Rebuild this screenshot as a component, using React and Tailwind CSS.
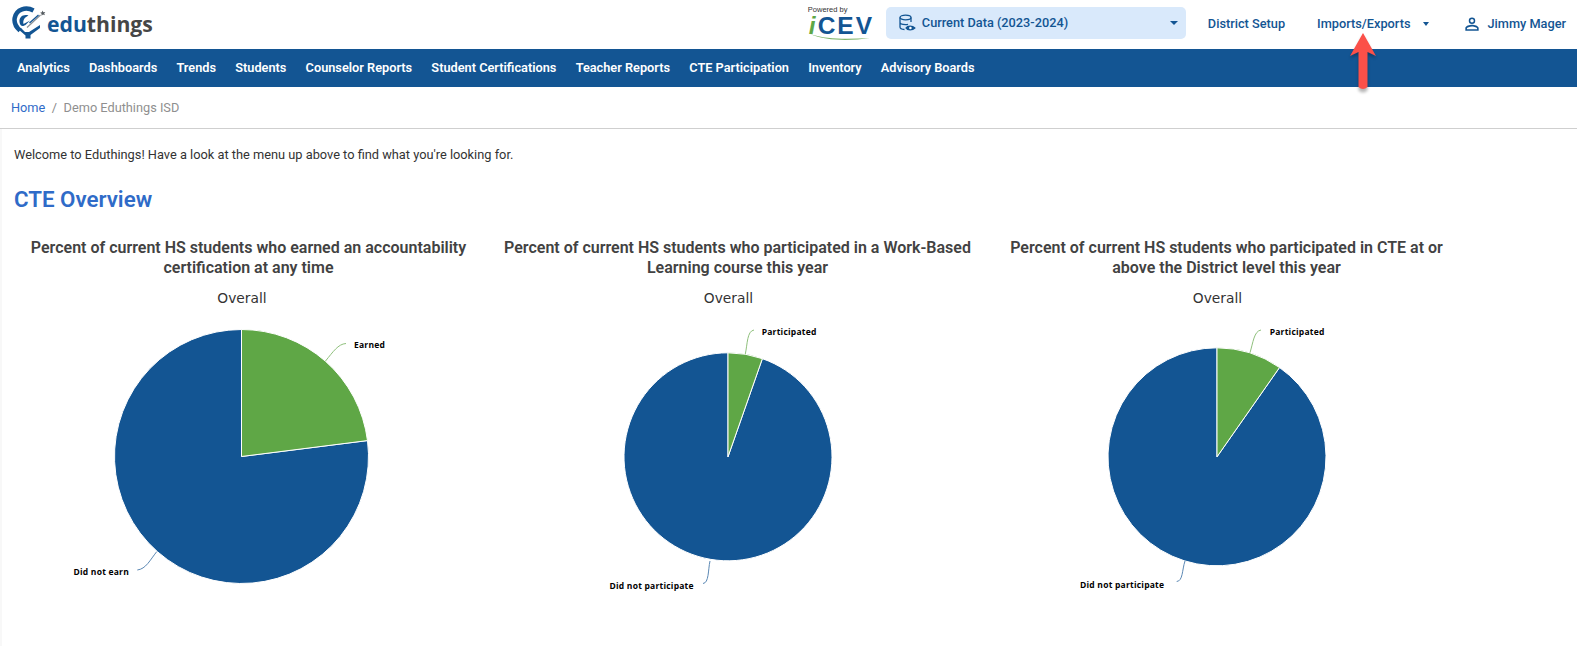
const navItems = ["Analytics","Dashboards","Trends","Students","Counselor Reports","Student Certifications","Teacher Reports","CTE Participation","Inventory","Advisory Boards"];

function polar(cx, cy, r, deg) {
  const a = (deg * Math.PI) / 180;
  return [cx + r * Math.sin(a), cy - r * Math.cos(a)];
}

function Pie({ colX, cx, cy, r, deg, labels }) {
  const [ex, ey] = polar(cx, cy, r, deg);
  return (
    <svg viewBox={`${colX} 288 489 320`} className="block w-[489px] h-[320px]">
      <text x={cx + 0.5} y="303" textAnchor="middle" fontFamily="'DejaVu Sans', sans-serif" fontSize="13.8" fill="#333333">Overall</text>
      <path d={`M${cx} ${cy} L${cx} ${cy - r} A${r} ${r} 0 1 0 ${ex} ${ey} Z`} fill="#135593" stroke="#ffffff" strokeWidth="1" />
      <path d={`M${cx} ${cy} L${cx} ${cy - r} A${r} ${r} 0 0 1 ${ex} ${ey} Z`} fill="#5fa746" stroke="#ffffff" strokeWidth="1" />
      {labels.map((l) => (
        <g key={l.text}>
          <path d={l.line} fill="none" stroke={l.color} strokeWidth="1" />
          <text x={l.x} y={l.y} fontFamily="'Open Sans', sans-serif" fontWeight="700" fontSize="8.5" letterSpacing="0.22" fill="#000000">{l.text}</text>
        </g>
      ))}
    </svg>
  );
}

function Chart({ title, pie }) {
  return (
    <div className="w-[489px] shrink-0">
      <h3 className="w-[476px] mx-auto h-[50px] text-center text-[16px] leading-[19.5px] font-semibold text-[#424242]">{title}</h3>
      <Pie {...pie} />
    </div>
  );
}

function Logo() {
  return (
    <div className="flex items-center">
      <svg width="35" height="34" viewBox="10 6 35 34" className="shrink-0">
        <path d="M32.5 10.5 C25 6.5 15.5 9 13.7 18 C12.8 23 15 27 19 30.5" fill="none" stroke="#135593" strokeWidth="4.5" />
        <path d="M17 29 L24.5 35.5 L24.5 38.5 L29.5 38.5 L29.5 35 L39 28 L39 25 L28 32 L24 32 L20 28 Z" fill="#135593" />
        <path d="M27.5 15.5 C22 14 18 17 18.5 22 C19 26.5 22 27 25 24.5 L29 20.5 L22.5 24 C21.5 20 24 17 27.5 15.5 Z" fill="#135593" />
        <path d="M26 27.5 L39.5 15" stroke="#8a8f94" strokeWidth="1.2" />
        <path d="M28.5 23 L37.5 15" stroke="#135593" strokeWidth="1.3" />
        <path d="M41.5 10.5 L42.4 12.2 L44.3 12.1 L43.2 13.5 L43.9 15.3 L42 14.6 L40.5 15.8 L40.6 13.8 L39.1 12.7 L40.9 12.3 Z" fill="#555b60" />
      </svg>
      <div className="ml-[1px] mt-[2px] text-[21.2px] leading-none font-bold font-['Open_Sans',sans-serif]">
        <span className="text-[#135593]">edu</span><span className="text-[#464646]">things</span>
      </div>
    </div>
  );
}

function Icev() {
  return (
    <div className="w-[66px] h-[40px] relative shrink-0 font-['Liberation_Sans',sans-serif]">
      <div className="text-[7.5px] leading-[8px] text-[#333] pt-[3px]">Powered by</div>
      <div className="text-[24.5px] leading-[23px] font-bold tracking-[2px] text-[#135593] pl-[1px]"><span className="text-[#5fa746] italic">i</span>CEV</div>
      <svg width="66" height="8" viewBox="0 0 66 8" className="absolute left-0 top-[30px]">
        <path d="M2 1 C20 7 42 6 62 5 C42 8 18 8 2 1 Z" fill="#7fb56a" />
      </svg>
    </div>
  );
}

function Caret({ w = 8 }) {
  return <span className="inline-block w-0 h-0 border-t-[4px] border-t-[#135593] border-x-[4px] border-x-transparent" style={{ borderLeftWidth: w / 2, borderRightWidth: w / 2 }} />;
}

function DbIcon() {
  return (
    <svg width="18" height="18" viewBox="0 0 18 18" fill="none" stroke="#135593" strokeWidth="1.3" className="shrink-0">
      <ellipse cx="7.5" cy="3.5" rx="5.5" ry="2.3" />
      <path d="M2 3.5 V13 C2 14.4 4 15.4 6.5 15.5 M13 3.5 V8 M2 8.3 C2 9.7 4.5 10.6 7.5 10.6 C8.5 10.6 9.5 10.5 10 10.3" />
      <path d="M8 14 C9.5 11.5 14.5 11.5 16.8 14 C14.5 16.5 9.5 16.5 8 14 Z" fill="#135593" stroke="#135593" />
      <circle cx="12.4" cy="14" r="1.3" fill="#ffffff" stroke="none" />
    </svg>
  );
}

function UserIcon() {
  return (
    <svg width="20" height="20" viewBox="0 0 24 24" fill="#135593" className="shrink-0">
      <path d="M12 6a2.1 2.1 0 1 1 0 4.2A2.1 2.1 0 0 1 12 6m0 9c2.97 0 6.1 1.46 6.1 2.1v1.1H5.9v-1.1c0-.64 3.13-2.1 6.1-2.1M12 4.1a3.9 3.9 0 1 0 0 7.8 3.9 3.9 0 0 0 0-7.8zM12 13c-2.67 0-8 1.34-8 4v3h16v-3c0-2.66-5.33-4-8-4z" />
    </svg>
  );
}

function Arrow() {
  return (
    <svg width="40" height="64" viewBox="0 0 40 64" className="absolute left-[1343px] top-[31px] pointer-events-none">
      <path d="M20 2 L33 25 L24.5 21 L24.5 57 Q20 61 15.5 57 L15.5 21 L7 25 Z" fill="#000000" opacity="0.28" transform="translate(0 2.5)" style={{ filter: "blur(1.5px)" }} />
      <path d="M20 2 L33 25 L24.5 21 L24.5 56 Q20 60 15.5 56 L15.5 21 L7 25 Z" fill="#fb5049" />
    </svg>
  );
}

const green = "#8fc07c";
const blue = "#5b88b4";

export default function App() {
  return (
    <div className="relative w-[1577px] h-[646px] overflow-hidden bg-white font-['Roboto',sans-serif]">
      <header className="h-[49px] flex items-center pl-[11px] pb-[3px] text-[12.75px] font-medium text-[#135593]">
        <Logo />
        <div className="ml-auto flex items-center">
          <Icev />
          <div className="ml-[12px] w-[300px] h-[32px] rounded-[5px] bg-[#d9e9fb] flex items-center pl-[12px] pr-[8px]">
            <DbIcon />
            <span className="ml-[6px]">Current Data (2023-2024)</span>
            <span className="ml-auto flex"><Caret /></span>
          </div>
          <span className="ml-[22px] mt-[2px]">District Setup</span>
          <span className="ml-[32px] mt-[2px]">Imports/Exports</span>
          <span className="ml-[13px] mt-[2px] flex"><Caret w={6} /></span>
          <span className="ml-[33px] mt-[2px] flex"><UserIcon /></span>
          <span className="ml-[5px] mr-[11px] mt-[2px]">Jimmy Mager</span>
        </div>
      </header>
      <nav className="h-[38px] bg-[#135593] flex items-center gap-[19.2px] pl-[17px] text-[12.75px] font-semibold text-white">
        {navItems.map((n) => <span key={n}>{n}</span>)}
      </nav>
      <div className="h-[42px] border-b border-[#cfcfcf] flex items-center pl-[11px] text-[12.75px]">
        <span className="text-[#2f6bc8]">Home</span>
        <span className="mx-[6.5px] text-[#8a8a8a]">/</span>
        <span className="text-[#8f8f8f]">Demo Eduthings ISD</span>
      </div>
      <main className="h-[518px] border-l-[2px] border-[#f8f8f8] pl-[12px]">
        <p className="pt-[18px] text-[12.8px] leading-[16px] text-[#333333]">Welcome to Eduthings! Have a look at the menu up above to find what you're looking for.</p>
        <h2 className="mt-[22px] text-[22.3px] leading-[28px] font-semibold text-[#2f6bc8]">CTE Overview</h2>
        <div className="mt-[25px] -ml-[10px] flex">
          <Chart
            title="Percent of current HS students who earned an accountability certification at any time"
            pie={{ colX: 4, cx: 241.5, cy: 456.5, r: 127, deg: 82.8, labels: [
              { text: "Earned", x: 354, y: 348, color: green, line: "M325.5 361 C333 352 338 344 346 343.5" },
              { text: "Did not earn", x: 73.5, y: 575, color: blue, line: "M156.7 551.7 C150 560 146 569 137.3 570" },
            ] }}
          />
          <Chart
            title="Percent of current HS students who participated in a Work-Based Learning course this year"
            pie={{ colX: 493, cx: 728, cy: 456.8, r: 104, deg: 19.3, labels: [
              { text: "Participated", x: 761.7, y: 335, color: green, line: "M745.3 354 C747.5 344 747 331 754 330" },
              { text: "Did not participate", x: 609.5, y: 589, color: blue, line: "M710 561 C708 570 709 583 703 583.5" },
            ] }}
          />
          <Chart
            title="Percent of current HS students who participated in CTE at or above the District level this year"
            pie={{ colX: 982, cx: 1217, cy: 456.8, r: 109, deg: 35, labels: [
              { text: "Participated", x: 1269.7, y: 335, color: green, line: "M1250 352.7 C1253 343 1254 331 1261 330" },
              { text: "Did not participate", x: 1080, y: 587.5, color: blue, line: "M1185 561 C1182 570 1183 581 1176.7 581.5" },
            ] }}
          />
        </div>
      </main>
      <Arrow />
    </div>
  );
}
